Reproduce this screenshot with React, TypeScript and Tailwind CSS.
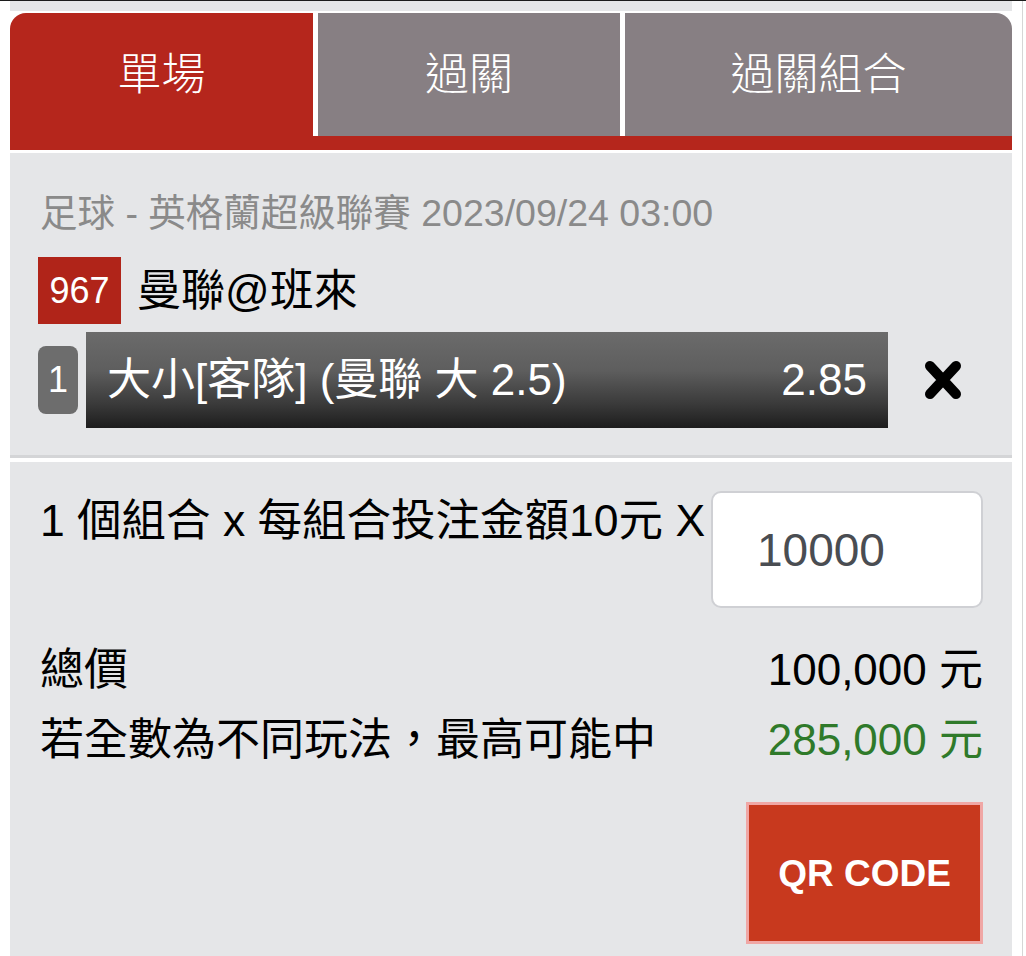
import React from "react";

const FONT = "font-['Liberation_Sans','Noto_Sans_CJK_TC',sans-serif]";

function CloseIcon() {
  return (
    <svg width="44" height="44" viewBox="0 0 44 44" className="blur-[0.7px]">
      <path d="M9 8 L35 36 M35 8 L9 36" stroke="#000" strokeWidth="10" strokeLinecap="round" />
    </svg>
  );
}

export default function App() {
  return (
    <div className={`relative w-[1026px] h-[956px] bg-white overflow-hidden ${FONT}`}>
      <div className="h-px bg-[#1c1c1c]" />
      <div className="flex h-[955px]">
        <div className="ml-[10px] w-[1002px] flex flex-col">
          <div className="h-[10px] bg-[#e5e6e8]" />
          <div className="h-[2px]" />
          <div className="flex h-[123px] gap-[5px]">
            <div className="w-[303px] rounded-tl-[16px] bg-[#b5261c] flex items-center justify-center text-white text-[44px] font-light leading-none">
              單場
            </div>
            <div className="w-[302px] bg-[#877f83] flex items-center justify-center text-white text-[44px] font-light leading-none">
              過關
            </div>
            <div className="flex-1 rounded-tr-[16px] bg-[#877f83] flex items-center justify-center text-white text-[44px] font-light leading-none">
              過關組合
            </div>
          </div>
          <div className="h-[14px] bg-[#b5261c]" />
          <div className="h-[3px]" />
          {/* section 1 */}
          <div className="h-[305px] bg-[#e5e6e8] border-b-[3px] border-[#d4d5d7] flex flex-col">
            <div className="pl-[30px] pt-[38px] text-[37.5px] leading-[44px] text-[#8a8a8a] whitespace-nowrap">
              足球 - 英格蘭超級聯賽 2023/09/24 03:00
            </div>
            <div className="mt-[22px] pl-[28px] flex items-center">
              <div className="w-[83px] h-[67px] bg-[#b02419] flex items-center justify-center text-white text-[36px] leading-none">
                967
              </div>
              <div className="ml-[16px] text-[44px] leading-none text-black whitespace-nowrap">曼聯@班來</div>
            </div>
            <div className="mt-[8px] pl-[28px] flex items-center">
              <div className="w-[40px] h-[68px] rounded-[8px] bg-[#6d6d6d] flex items-center justify-center text-white text-[36px] leading-none">
                1
              </div>
              <div className="ml-[8px] w-[802px] h-[96px] bg-[linear-gradient(to_bottom,#6b6b6b_0%,#5e5e5e_40%,#3a3a3a_75%,#1d1d1d_100%)] flex items-center justify-between px-[21px] text-white text-[44px] leading-none whitespace-nowrap">
                <span>大小[客隊] (曼聯 大 2.5)</span>
                <span>2.85</span>
              </div>
              <div className="ml-[33px] flex items-center">
                <CloseIcon />
              </div>
            </div>
          </div>
          <div className="h-[4px]" />
          {/* section 2 */}
          <div className="flex-1 bg-[#e5e6e8] pl-[30px] pr-[29px] flex flex-col">
            <div className="mt-[29px] flex items-start justify-between">
              <div className="mt-[4px] text-[44.5px] leading-[52px] text-black whitespace-nowrap">
                1 個組合 x 每組合投注金額10元 X
              </div>
              <div className="w-[272px] h-[117px] bg-white rounded-[10px] border-2 border-[#cfd0d4] flex items-center pl-[44px] text-[46px] leading-none text-[#4a4d52]">
                10000
              </div>
            </div>
            <div className="mt-[27px] flex justify-between text-[44px] leading-[70px] text-black whitespace-nowrap">
              <span>總價</span>
              <span>100,000 元</span>
            </div>
            <div className="flex justify-between text-[44px] leading-[70px] whitespace-nowrap">
              <span className="text-black">若全數為不同玩法，最高可能中</span>
              <span className="text-[#2f7a2a]">285,000 元</span>
            </div>
            <div className="mt-[27px] flex justify-end">
              <div className="w-[237px] h-[142px] bg-[#c8391e] border-[3px] border-[#f0a7a5] flex items-center justify-center text-white font-bold text-[37px] leading-none">
                QR CODE
              </div>
            </div>
          </div>
        </div>
        <div className="w-[10px]" />
        <div className="w-px bg-[#d6d6d6]" />
      </div>
    </div>
  );
}
